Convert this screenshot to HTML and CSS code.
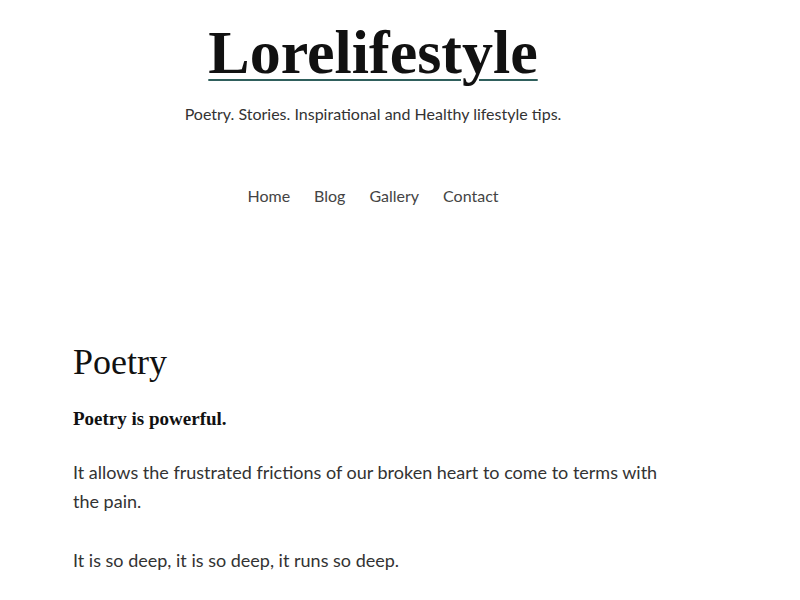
FILE: index.html
```html
<!DOCTYPE html>
<html lang="en">
<head>
<meta charset="utf-8">
<title>Lorelifestyle</title>
<link rel="stylesheet" href="styles.css">
</head>
<body>
<div class="page">
  <header class="site-header">
    <a class="site-title" href="#">Lorelifestyle</a>
    <p class="tagline">Poetry. Stories. Inspirational and Healthy lifestyle tips.</p>
    <nav class="nav">
      <a href="#">Home</a>
      <a href="#">Blog</a>
      <a href="#">Gallery</a>
      <a href="#">Contact</a>
    </nav>
  </header>
  <main class="content">
    <h1 class="page-title">Poetry</h1>
    <p class="lead">Poetry is powerful.</p>
    <p class="text">It allows the frustrated frictions of our broken heart to come to terms with the pain.</p>
    <p class="text">It is so deep, it is so deep, it runs so deep.</p>
  </main>
</div>
</body>
</html>
```

FILE: styles.css
```css
html, body {
  margin: 0;
  padding: 0;
  background: #ffffff;
}
.page {
  width: 600px;
  margin-left: 73px;
  font-family: Lato, "Noto Sans", sans-serif;
  color: #333;
}
.site-header {
  display: flex;
  flex-direction: column;
  align-items: center;
  padding-top: 14px;
}
.site-title {
  font-family: "Liberation Serif", "DejaVu Serif", serif;
  font-weight: bold;
  font-size: 62px;
  line-height: 76px;
  color: #111;
  text-decoration: underline;
  text-decoration-color: #2f5f5c;
  text-decoration-thickness: 2px;
  text-underline-offset: 6px;
}
.tagline {
  margin: 14px 0 0;
  font-size: 16px;
  line-height: 20px;
  color: #333;
}
.nav {
  display: flex;
  gap: 24px;
  margin-top: 62px;
}
.nav a {
  font-size: 16px;
  line-height: 20px;
  color: #444;
  text-decoration: none;
}
.content {
  padding-top: 134px;
}
.page-title {
  margin: 0;
  font-family: "Liberation Serif", "DejaVu Serif", serif;
  font-weight: normal;
  font-size: 36px;
  line-height: 44px;
  color: #111;
}
.lead {
  margin: 21px 0 0;
  font-family: "Liberation Serif", "DejaVu Serif", serif;
  font-weight: bold;
  font-size: 19px;
  line-height: 28px;
  color: #111;
}
.text {
  margin: 25px 0 0;
  font-size: 18px;
  line-height: 29px;
  color: #333;
}
.text + .text {
  margin-top: 30px;
}
```
